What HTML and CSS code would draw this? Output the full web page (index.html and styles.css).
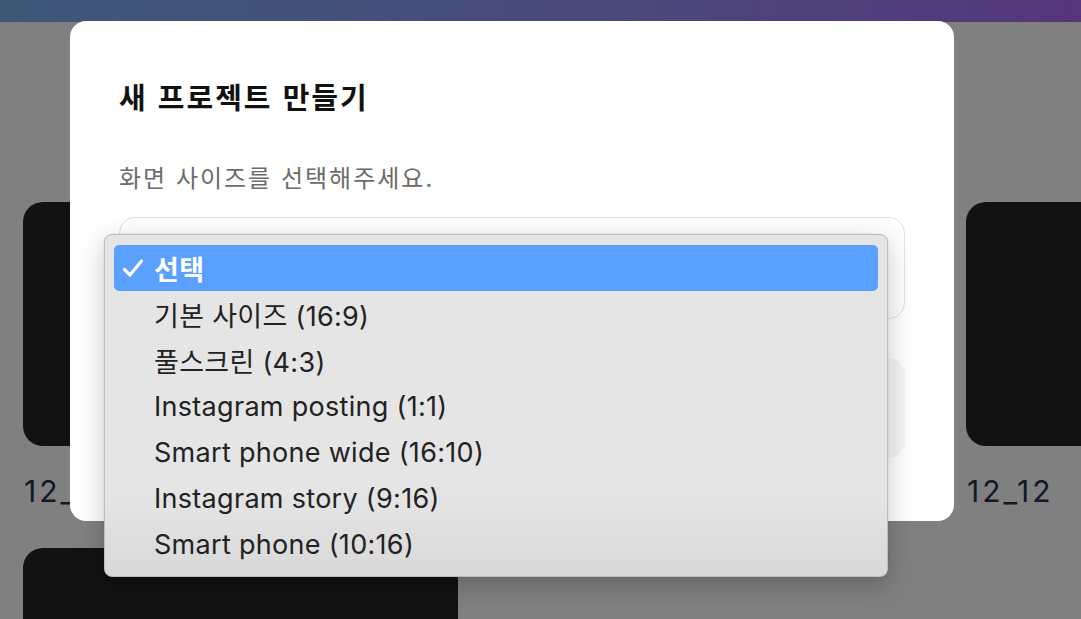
FILE: index.html
```html
<!DOCTYPE html>
<html lang="ko">
<head>
<meta charset="utf-8">
<link rel="stylesheet" href="styles.css">
</head>
<body>
<header class="topbar"></header>
<main class="gallery">
  <div class="project">
    <div class="thumb"></div>
    <div class="label">12_12</div>
  </div>
  <div class="project">
    <div class="thumb"></div>
    <div class="label">12_12</div>
  </div>
  <div class="project">
    <div class="thumb"></div>
    <div class="label">12_12</div>
  </div>
  <div class="project">
    <div class="thumb"></div>
  </div>
</main>

<div class="modal">
  <h1 class="modal-title">새 프로젝트 만들기</h1>
  <p class="modal-desc">화면 사이즈를 선택해주세요.</p>
  <div class="select-box"></div>
  <div class="preview-box"></div>
</div>

<ul class="menu">
  <li class="item selected"><span class="check">
    <svg width="22" height="20" viewBox="0 0 22 20"><path d="M2.5 11.5 L8 17 L19.5 3" fill="none" stroke="#fff" stroke-width="3.2" stroke-linecap="round" stroke-linejoin="round"/></svg>
  </span>선택</li>
  <li class="item">기본 사이즈 (16:9)</li>
  <li class="item">풀스크린 (4:3)</li>
  <li class="item">Instagram posting (1:1)</li>
  <li class="item">Smart phone wide (16:10)</li>
  <li class="item">Instagram story (9:16)</li>
  <li class="item">Smart phone (10:16)</li>
</ul>
</body>
</html>
```

FILE: styles.css
```css
* { box-sizing: border-box; }
html, body {
  margin: 0;
  padding: 0;
  width: 1081px;
  height: 619px;
  overflow: hidden;
  background: #808080;
  font-family: Inter, "Noto Sans CJK KR", sans-serif;
}
.topbar {
  height: 22px;
  background: linear-gradient(90deg, #3e5878 0%, #4a4a7a 55%, #54367a 100%);
}
.gallery {
  display: grid;
  grid-template-columns: repeat(3, 435px);
  column-gap: 36.5px;
  row-gap: 0;
  padding: 180px 0 0 23px;
  height: 597px;
  overflow: hidden;
}
.project {
  height: 346px;
}
.thumb {
  height: 244px;
  background: #121212;
  border-radius: 20px;
}
.label {
  margin-top: 26px;
  font-size: 30px;
  letter-spacing: 3px;
  color: #121827;
  line-height: 38px;
  padding-left: 1px;
}

.modal {
  position: absolute;
  left: 70px;
  top: 21px;
  width: 884px;
  height: 500px;
  background: #fff;
  border-radius: 16px;
  padding: 55px 49px 0 49px;
}
.modal-title {
  margin: 0;
  font-family: "Noto Sans CJK KR", sans-serif;
  font-size: 29px;
  letter-spacing: 2px;
  font-weight: 700;
  line-height: 40px;
  color: #111;
}
.modal-desc {
  margin: 45px 0 0 0;
  font-family: "Noto Sans CJK KR", sans-serif;
  font-size: 24px;
  letter-spacing: 2px;
  line-height: 32px;
  color: #6b6b6b;
}
.select-box {
  margin-top: 24px;
  height: 102px;
  border: 1px solid #e2e2e2;
  border-radius: 16px;
  background: #fff;
}
.preview-box {
  margin-top: 39px;
  height: 100px;
  border-radius: 16px;
  background: #f6f6f6;
}

.menu {
  position: absolute;
  left: 104px;
  top: 234px;
  width: 784px;
  height: 343px;
  margin: 0;
  padding: 10px 9px 11px 9px;
  list-style: none;
  background: linear-gradient(180deg, #e5e5e5 0%, #e5e5e5 75%, #d9d9d9 100%);
  border: 1px solid #bcbcbc;
  border-radius: 8px;
  box-shadow: 0 8px 28px rgba(0,0,0,0.22), 0 0 2px rgba(0,0,0,0.1);
}
.item {
  height: 46px;
  display: flex;
  align-items: center;
  padding-left: 40px;
  font-size: 27px;
  letter-spacing: 0.3px;
  color: #222;
  border-radius: 5px;
  position: relative;
}
.item.selected {
  background: #59a0ff;
  color: #fff;
  font-weight: 600;
}
.check {
  position: absolute;
  left: 8px;
  top: 13px;
  width: 22px;
  height: 20px;
  display: block;
}
.check svg { display: block; }
```
